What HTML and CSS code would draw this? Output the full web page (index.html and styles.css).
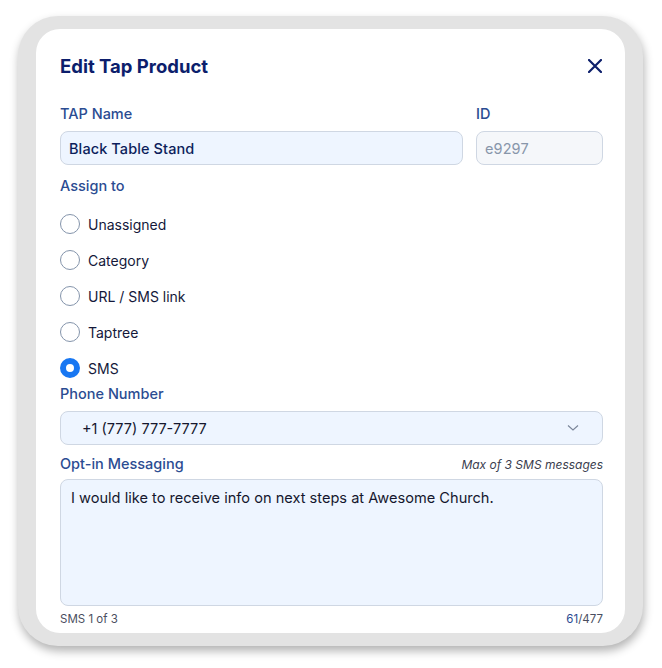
FILE: index.html
```html
<!DOCTYPE html>
<html>
<head>
<meta charset="utf-8">
<link rel="stylesheet" href="styles.css">
</head>
<body>
<div class="frame">
  <div class="card">
    <div class="header">
      <h1 class="title">Edit Tap Product</h1>
      <svg class="close" width="14" height="14" viewBox="0 0 14 14"><path d="M1 1L13 13M13 1L1 13" stroke="#0d1f6b" stroke-width="2.2" stroke-linecap="round"/></svg>
    </div>
    <div class="row-two">
      <div class="field grow">
        <div class="label">TAP Name</div>
        <div class="input">Black Table Stand</div>
      </div>
      <div class="field idf">
        <div class="label">ID</div>
        <div class="input disabled">e9297</div>
      </div>
    </div>
    <div class="label assign">Assign to</div>
    <div class="radios">
      <div class="radio"><span class="dot"></span>Unassigned</div>
      <div class="radio"><span class="dot"></span>Category</div>
      <div class="radio"><span class="dot"></span>URL / SMS link</div>
      <div class="radio"><span class="dot"></span>Taptree</div>
      <div class="radio"><span class="dot on"></span>SMS</div>
    </div>
    <div class="label phone-label">Phone Number</div>
    <div class="input select"><span>+1 (777) 777-7777</span>
      <svg width="12" height="8" viewBox="0 0 12 8"><path d="M1 1.5L6 6L11 1.5" fill="none" stroke="#7a8599" stroke-width="1.1"/></svg>
    </div>
    <div class="opt-head">
      <div class="label">Opt-in Messaging</div>
      <div class="hint">Max of 3 SMS messages</div>
    </div>
    <div class="textarea">I would like to receive info on next steps at Awesome Church.</div>
    <div class="foot">
      <span>SMS 1 of 3</span>
      <span><span class="count">61</span>/477</span>
    </div>
  </div>
</div>
</body>
</html>
```

FILE: styles.css
```css
* { box-sizing: border-box; }
body {
  margin: 0;
  background: #ffffff;
  font-family: "Inter", "Open Sans", sans-serif;
  padding: 16px 0 22px 18px;
}
.frame {
  width: 625px;
  height: 630px;
  background: #e3e3e3;
  border-radius: 40px;
  padding: 13px 18px;
  box-shadow: 1px 5px 10px rgba(0,0,0,0.3);
}
.card {
  background: #ffffff;
  border-radius: 24px;
  height: 604px;
  padding: 25px 22px 0 24px;
}
.header {
  display: flex;
  justify-content: space-between;
  align-items: center;
  height: 24px;
}
.title {
  margin: 0;
  font-size: 18.5px;
  font-weight: 700;
  color: #0c1e6c;
}
.close { margin-right: 1px; }
.row-two {
  display: flex;
  gap: 13px;
  margin-top: 26px;
}
.grow { flex: 1; }
.idf { width: 127px; }
.label {
  font-size: 14.5px;
  line-height: 20px;
  color: #2b4c92;
  font-weight: 500;
}
.field .label { margin-bottom: 7px; }
.input {
  height: 34px;
  border: 1px solid #cfd7e3;
  border-radius: 8px;
  background: #eef5ff;
  display: flex;
  align-items: center;
  padding: 0 8px;
  font-size: 14.5px;
  font-weight: 500;
  color: #0c1e5c;
  letter-spacing: 0.1px;
}
.input.disabled {
  background: #f5f7fa;
  color: #8896aa;
  font-weight: 400;
}
.assign { margin-top: 11px; }
.radios {
  display: flex;
  flex-direction: column;
  gap: 12px;
  margin-top: 16px;
}
.radio {
  display: flex;
  align-items: center;
  height: 24px;
  font-size: 14px;
  color: #14183a;
}
.dot {
  width: 20px;
  height: 20px;
  border-radius: 50%;
  border: 1.5px solid #8494ab;
  margin-right: 8px;
  flex: none;
}
.dot.on {
  border: 6px solid #1877f2;
  background: #ffffff;
}
.phone-label { margin-top: 4px; }
.select {
  margin-top: 7px;
  justify-content: space-between;
  padding: 0 23px 0 21px;
  font-weight: 400;
  color: #15172e;
  font-size: 14.5px;
  letter-spacing: 0;
}
.opt-head {
  display: flex;
  justify-content: space-between;
  align-items: center;
  margin-top: 9px;
}
.hint {
  font-size: 12px;
  font-style: italic;
  color: #3a3d4e;
}
.textarea {
  margin-top: 5px;
  height: 127px;
  border: 1px solid #cfd7e3;
  border-radius: 8px;
  background: #eef5ff;
  padding: 8px 10px;
  font-size: 14.6px;
  line-height: 20px;
  color: #15172e;
}
.foot {
  display: flex;
  justify-content: space-between;
  margin-top: 5px;
  font-size: 11.5px;
  line-height: 16px;
  color: #4a4e60;
}
.count { color: #2b4c92; }
```
